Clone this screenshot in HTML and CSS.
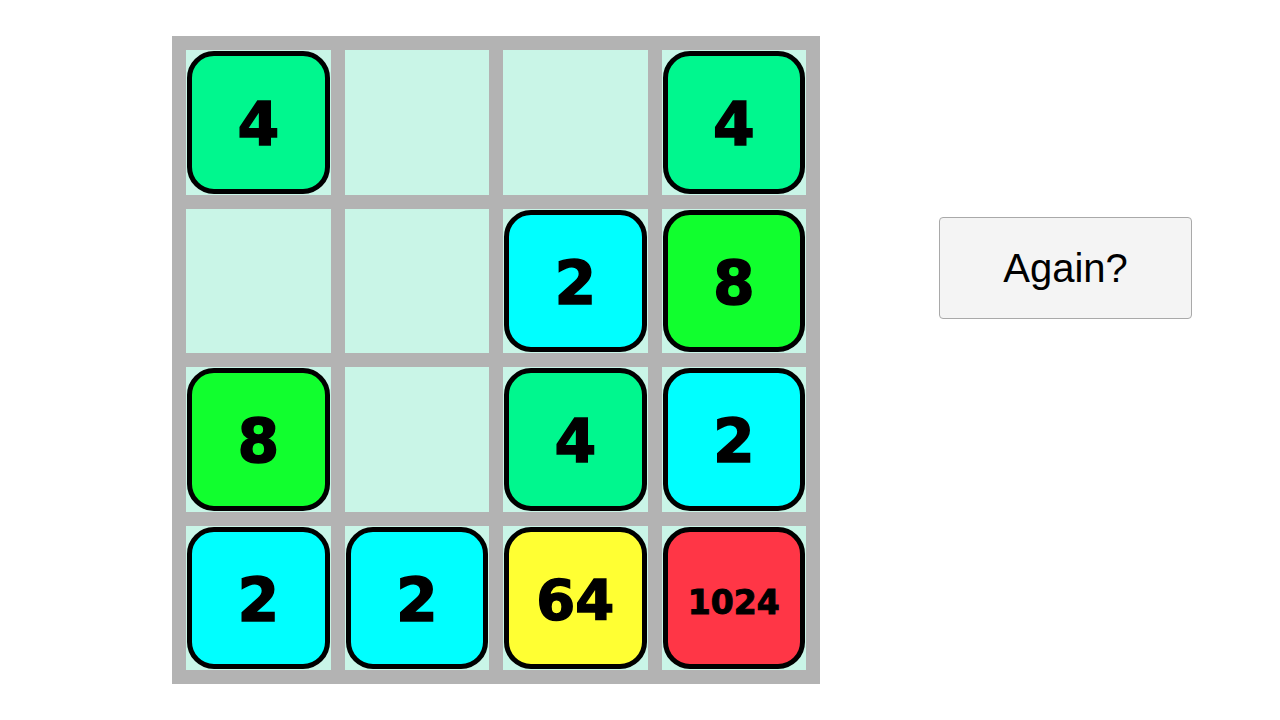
FILE: index.html
```html
<!DOCTYPE html>
<html lang="en">
<head>
    <meta charset="UTF-8">
    <meta name="viewport" content="width=device-width, initial-scale=1.0">
    <title>2048</title>
    <link rel="stylesheet" href="styles.css">
</head>
<body>
    <div class="game">
        <div class="board">
            <div class="cell"><div class="tile t4">4</div></div>
            <div class="cell"></div>
            <div class="cell"></div>
            <div class="cell"><div class="tile t4">4</div></div>

            <div class="cell"></div>
            <div class="cell"></div>
            <div class="cell"><div class="tile t2">2</div></div>
            <div class="cell"><div class="tile t8">8</div></div>

            <div class="cell"><div class="tile t8">8</div></div>
            <div class="cell"></div>
            <div class="cell"><div class="tile t4">4</div></div>
            <div class="cell"><div class="tile t2">2</div></div>

            <div class="cell"><div class="tile t2">2</div></div>
            <div class="cell"><div class="tile t2">2</div></div>
            <div class="cell"><div class="tile t64">64</div></div>
            <div class="cell"><div class="tile t1024">1024</div></div>
        </div>

        <button class="again">Again?</button>
    </div>
</body>
</html>
```

FILE: styles.css
```css
body {
    margin: 0;
    padding: 0;
    background-color: #ffffff;
    font-family: "Liberation Sans", Arial, sans-serif;
}

.game {
    display: flex;
    align-items: flex-start;
    padding: 36px 0 0 172px;
}

.board {
    display: grid;
    grid-template-columns: repeat(4, 144.5px);
    grid-template-rows: repeat(4, 144.5px);
    gap: 14px;
    padding: 14px;
    background-color: #b3b3b3;
}

.cell {
    background-color: #c9f5e7;
    display: flex;
}

.tile {
    flex: 1;
    margin: 1px;
    padding-top: 4px;
    border: 5px solid #000;
    border-radius: 27px;
    display: flex;
    justify-content: center;
    align-items: center;
    font-family: "DejaVu Sans", Verdana, sans-serif;
    font-weight: bold;
    font-size: 60px;
    -webkit-text-stroke: 1.5px #000;
    color: #000;
}

.t2 { background-color: #00ffff; }
.t4 { background-color: #00f78e; }
.t8 { background-color: #11ff2e; }
.t64 { background-color: #ffff33; font-size: 56px; }
.t1024 { background-color: #ff3646; font-size: 33px; padding-top: 9px; -webkit-text-stroke: 1px #000; }

.again {
    margin: 181px 0 0 119px;
    width: 253px;
    height: 102px;
    background-color: #f4f4f4;
    border: 1px solid #a9a9a9;
    border-radius: 4px;
    font-family: "Liberation Sans", Arial, sans-serif;
    font-size: 40px;
    color: #000;
    padding: 0;
}
```
